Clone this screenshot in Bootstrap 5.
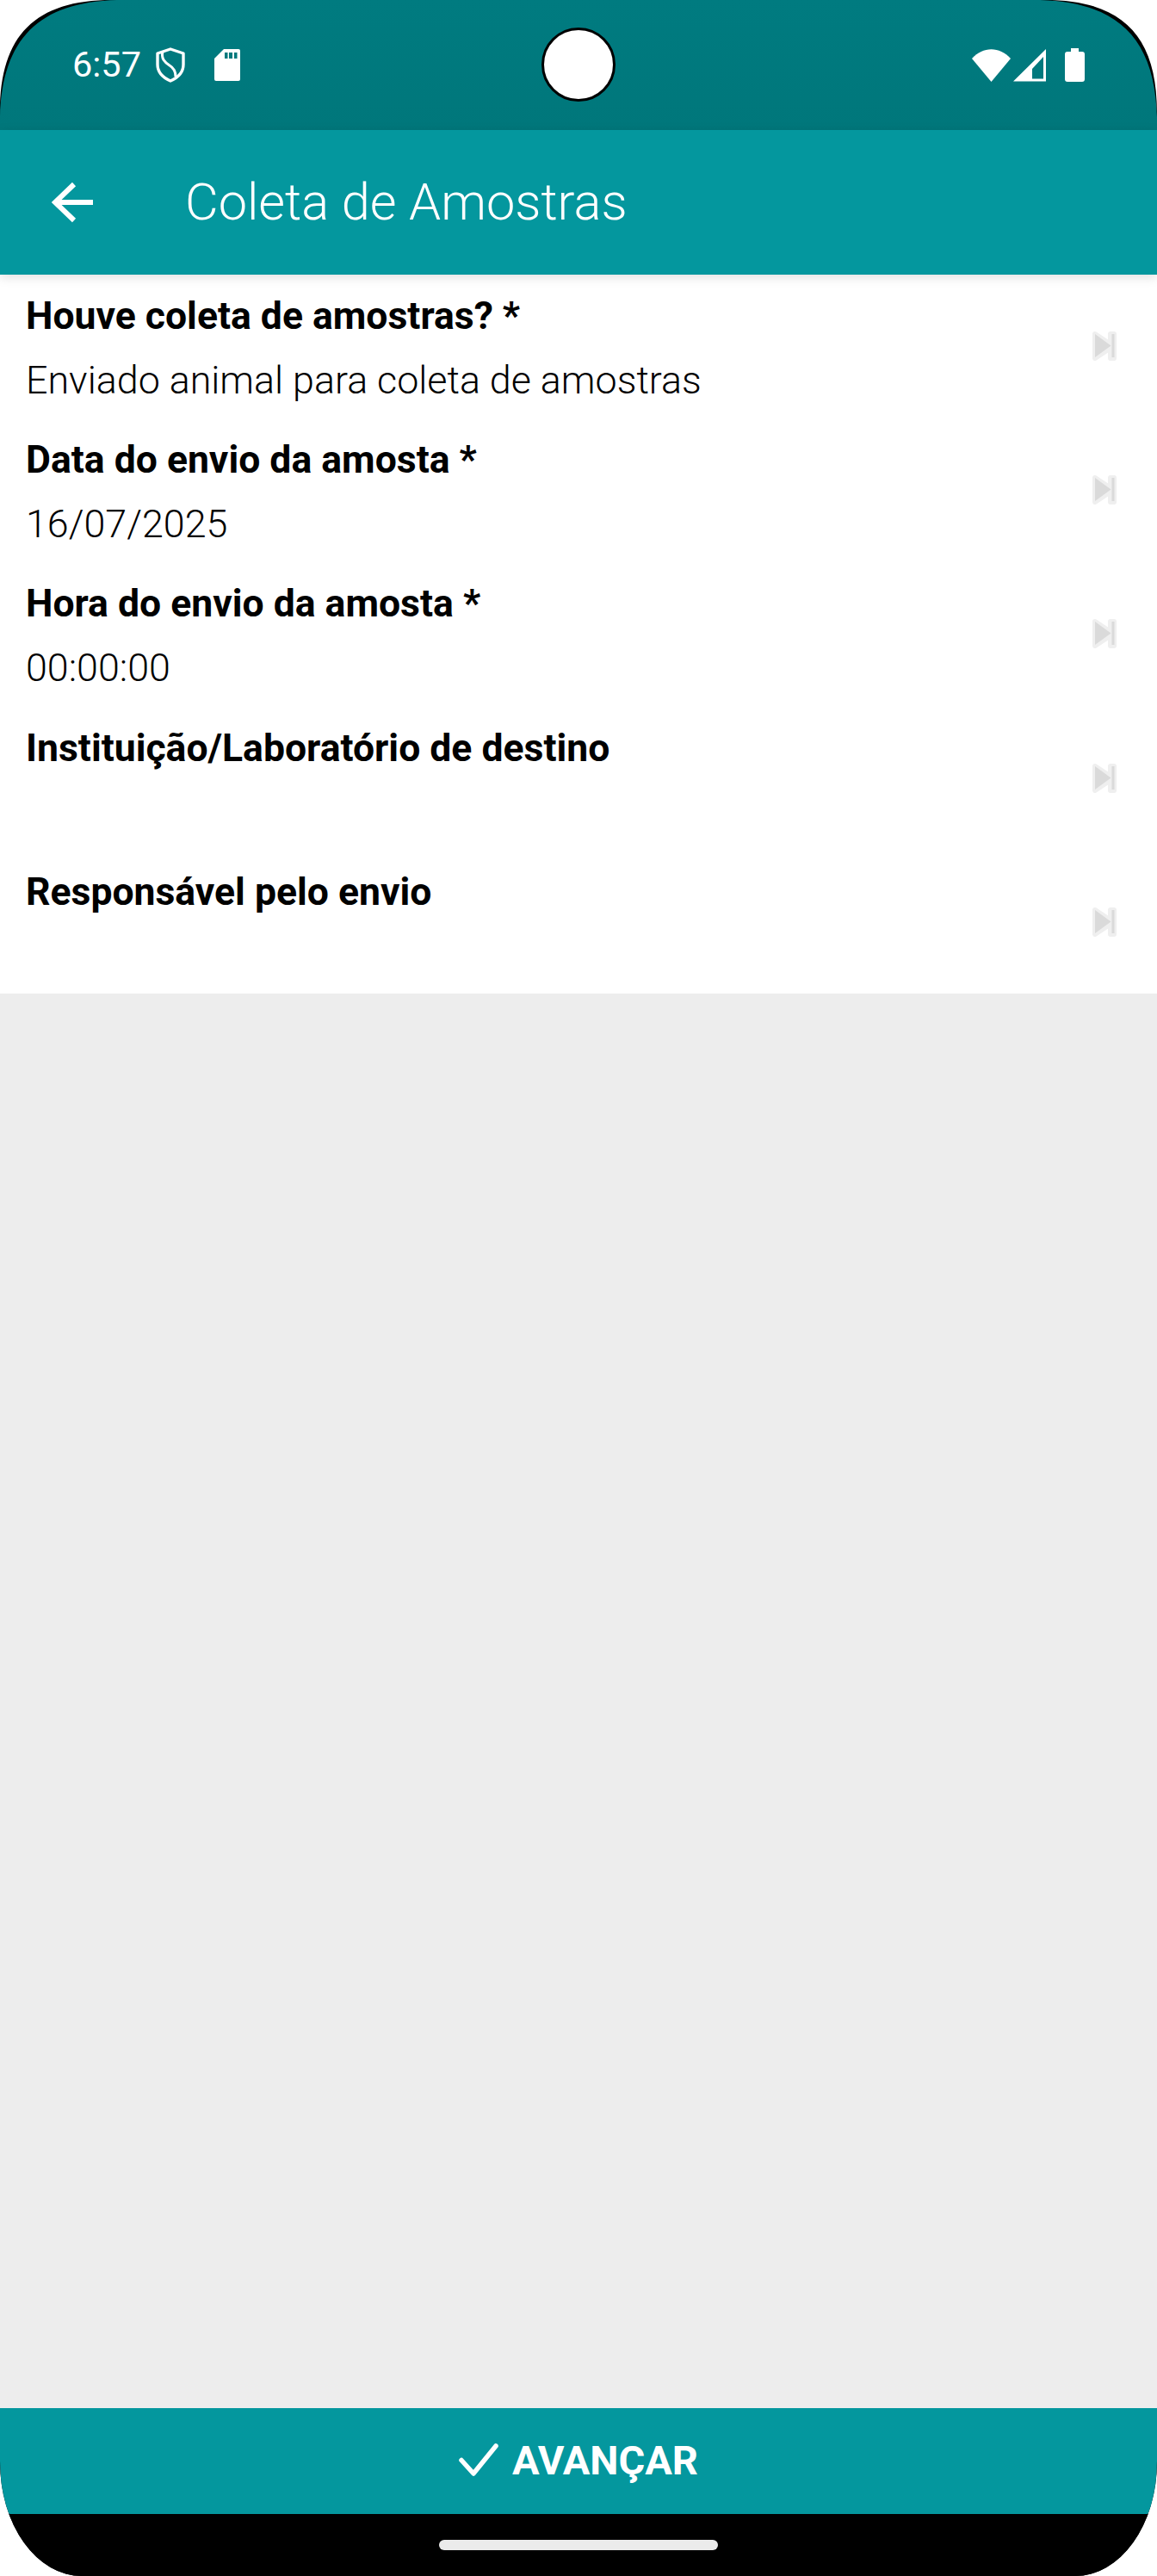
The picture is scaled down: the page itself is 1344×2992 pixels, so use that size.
<!DOCTYPE html>
<html lang="pt-BR">
<head>
    <meta charset="UTF-8">
    <title>Coleta de Amostras</title>
    <link href="https://cdn.jsdelivr.net/npm/bootstrap@5.3.0/dist/css/bootstrap.min.css" rel="stylesheet">
    <style>
        html, body { height: 100%; background: #fff; }
        body { font-family: Roboto, "Liberation Sans", sans-serif; }
        .device { height: 2992px; width: 1344px; background: #000; border-radius: 0 0 95px 95px / 0 0 132px 132px; overflow: hidden; }
        .status-area { height: 151px; background: linear-gradient(#007b80, #00777b); color: #fff; padding: 0 84px 0 84px; font-size: 41.5px; flex-shrink: 0; }
        .status-shield { margin-left: 17px; }
        .status-card { margin-left: 34px; }
        .status-signal { margin-left: 3px; }
        .status-battery { margin-left: 21px; }
        .corner-mask { position: absolute; top: 0; width: 140px; height: 140px; }
        .corner-left { left: 0; }
        .corner-right { right: 0; transform: scaleX(-1); }
        .camera-hole { position: absolute; left: 629px; top: 32px; width: 86px; height: 86px; border-radius: 50%; background: #fff; border: 3px solid #000; }
        .app-toolbar { height: 168px; background: #04979e; color: #fff; padding-left: 60px; box-shadow: 0 3px 12px rgba(0,0,0,.13); position: relative; flex-shrink: 0; }
        .app-title { font-size: 59.5px; font-weight: 300; margin-left: 107px; line-height: 1; padding-top: 2px; }
        .form-area { background: #fff; height: 835px; overflow: hidden; flex-shrink: 0; }
        .field-row { height: 167.2px; padding: 22px 47px 0 30px; }
        .field-label { font-size: 44.5px; font-weight: 700; color: #000; line-height: 52px; }
        .field-value { font-size: 44.8px; font-weight: 300; color: #000; line-height: 52px; margin-top: 23px; }
        .skip-icon { margin-top: 44px; flex-shrink: 0; }
        .filler { background: #ededed; }
        .next-btn { height: 123px; background: #04979e; color: #fff; font-size: 47px; font-weight: 700; flex-shrink: 0; border-radius: 0; border-bottom-left-radius: 12px 62px; border-bottom-right-radius: 12px 62px; }
        .next-btn:hover, .next-btn:active { background: #04979e; color: #fff; }
        .next-icon { margin-right: 16px; margin-bottom: 4px; }
        .nav-strip { height: 72px; background: #000; flex-shrink: 0; }
        .nav-pill { width: 324px; height: 12px; background: #ebebeb; border-radius: 6px; margin-top: 30px; }
    </style>
</head>
<body class="m-0 position-relative">
    <div class="device d-flex flex-column">
        <div class="status-area d-flex align-items-center justify-content-between">
            <div class="d-flex align-items-center">
                <span>6:57</span>
                <svg class="status-shield" width="34" height="41" viewBox="0 0 34 41" fill="none" stroke="#fff" stroke-linejoin="round"><path stroke-width="3.400" d="M17 2 L32 7 V20 C32 29 26 35 17 39 C8 35 2 29 2 20 V7 Z"/><path stroke-width="3" d="M8 5 C6 13 10 17 16 21 C21 24 23 28 23 34"/></svg>
                <svg class="status-card" width="30" height="37" viewBox="0 0 30 37"><path fill="#fff" d="M11 0 H28 A2 2 0 0 1 30 2 V35 A2 2 0 0 1 28 37 H2 A2 2 0 0 1 0 35 V11 Z"/><path fill="#00797d" d="M12 4 h3.500 v7 h-3.500z M17 4 h4 v7 h-4z M23 4 h3.500 v7 h-3.500z"/></svg>
            </div>
            <div class="d-flex align-items-center">
                <svg width="45" height="38" viewBox="0 0 45 38"><path fill="#fff" d="M0 11 C13 -3.500 32 -3.500 45 11 L22.500 38 Z"/></svg>
                <svg class="status-signal" width="39" height="38" viewBox="0 0 39 38"><path fill="#fff" fill-rule="evenodd" d="M38 0 V37.500 H0 Z M35 9 L22 23 V34.500 H35 Z"/></svg>
                <svg class="status-battery" width="23" height="39" viewBox="0 0 23 39"><path fill="#fff" d="M7 0 H16 V4 H20 A3 3 0 0 1 23 7 V36 A3 3 0 0 1 20 39 H3 A3 3 0 0 1 0 36 V7 A3 3 0 0 1 3 4 H7 Z"/></svg>
            </div>
        </div>
        <div class="camera-hole"></div>

        <div class="app-toolbar d-flex align-items-center">
            <svg width="48" height="48" viewBox="0 0 48 48" fill="none" stroke="#fff" stroke-width="6"><path d="M48 24 H5 M26 3 L4 24 L26 45"/></svg>
            <div class="app-title">Coleta de Amostras</div>
        </div>

        <div class="form-area">
            <div class="field-row d-flex justify-content-between">
                <div>
                    <div class="field-label">Houve coleta de amostras? *</div>
                    <div class="field-value">Enviado animal para coleta de amostras</div>
                </div>
                <svg class="skip-icon" width="28" height="34" viewBox="0 0 28 34"><use href="#skip-next"/></svg>
            </div>
            <div class="field-row d-flex justify-content-between">
                <div>
                    <div class="field-label">Data do envio da amosta *</div>
                    <div class="field-value">16/07/2025</div>
                </div>
                <svg class="skip-icon" width="28" height="34" viewBox="0 0 28 34"><use href="#skip-next"/></svg>
            </div>
            <div class="field-row d-flex justify-content-between">
                <div>
                    <div class="field-label">Hora do envio da amosta *</div>
                    <div class="field-value">00:00:00</div>
                </div>
                <svg class="skip-icon" width="28" height="34" viewBox="0 0 28 34"><use href="#skip-next"/></svg>
            </div>
            <div class="field-row d-flex justify-content-between">
                <div>
                    <div class="field-label">Instituição/Laboratório de destino</div>
                </div>
                <svg class="skip-icon" width="28" height="34" viewBox="0 0 28 34"><use href="#skip-next"/></svg>
            </div>
            <div class="field-row d-flex justify-content-between">
                <div>
                    <div class="field-label">Responsável pelo envio</div>
                </div>
                <svg class="skip-icon" width="28" height="34" viewBox="0 0 28 34"><use href="#skip-next"/></svg>
            </div>
        </div>

        <div class="filler flex-grow-1"></div>

        <button class="next-btn btn border-0 w-100 d-flex align-items-center justify-content-center p-0" type="button">
            <svg class="next-icon" width="46" height="38" viewBox="0 0 46 38" fill="none" stroke="#fff" stroke-width="5.500" stroke-linecap="round" stroke-linejoin="round"><path d="M3 19.500 L17 35 L43 3"/></svg>
            <span>AVANÇAR</span>
        </button>
        <div class="nav-strip d-flex justify-content-center"><div class="nav-pill"></div></div>
    </div>

    <svg class="corner-mask corner-left" viewBox="0 0 140 140"><path fill="#000" d="M0 0 H136 C45 2.500 2.500 45 0 136 Z"/><path fill="#fff" d="M0 0 H130 C41 0 0 41 0 130 Z"/></svg>
    <svg class="corner-mask corner-right" viewBox="0 0 140 140"><path fill="#000" d="M0 0 H136 C45 2.500 2.500 45 0 136 Z"/><path fill="#fff" d="M0 0 H130 C41 0 0 41 0 130 Z"/></svg>

    <svg width="0" height="0" class="position-absolute">
        <defs>
            <g id="skip-next">
                <path fill="#efefef" stroke="#efefef" stroke-width="6" stroke-linejoin="round" d="M3 3 L21 15 V3 H25 V31 H21 V19 L3 31 Z"/>
                <path fill="#dadada" d="M3 3 L21.500 16.500 L3 30 Z M22.500 3 H25.500 V30 H22.500 Z"/>
            </g>
        </defs>
    </svg>
    <script src="https://cdn.jsdelivr.net/npm/bootstrap@5.3.0/dist/js/bootstrap.bundle.min.js"></script>
</body>
</html>
